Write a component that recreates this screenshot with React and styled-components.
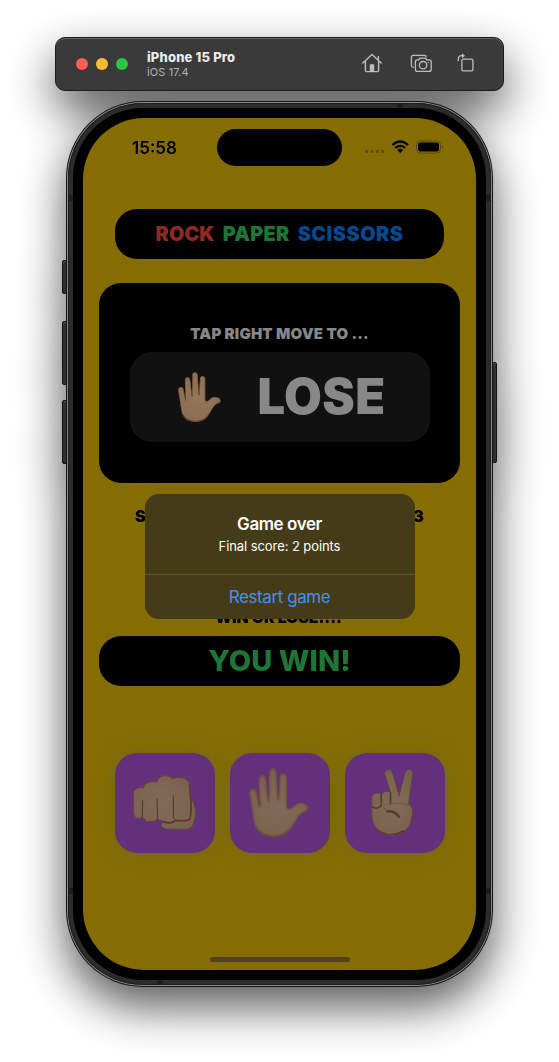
import React from "react";
import styled, { createGlobalStyle } from "styled-components";

const GlobalStyle = createGlobalStyle`
  * { box-sizing: border-box; }
  body { margin: 0; background: #fff; font-family: Inter, "Liberation Sans", sans-serif; }
`;

const Simulator = styled.main`
  width: 559px;
  height: 1062px;
  overflow: hidden;
  background: #fff;
`;

const Window = styled.div`
  display: flex;
  flex-direction: column;
  align-items: center;
  gap: 10px;
  padding-top: 37px;
  filter: drop-shadow(0 20px 23px rgba(0, 0, 0, 0.65));
`;

const Toolbar = styled.header`
  display: flex;
  align-items: center;
  width: 449px;
  height: 54px;
  padding: 0 29px 0 20px;
  border: 1px solid #1d1c1d;
  border-radius: 10px;
  background: #3a3a3a;
  box-shadow: inset 0 1px 0 #626262;
`;

const TrafficLights = styled.div`
  display: flex;
  gap: 8px;
`;

const Light = styled.span`
  width: 12px;
  height: 12px;
  border-radius: 50%;
  background: ${(p) => p.$color};
`;

const DeviceInfo = styled.div`
  margin-left: 19px;
  flex: 1;
`;

const DeviceName = styled.div`
  font-size: 13px;
  line-height: 15px;
  font-weight: 800;
  letter-spacing: 0.17px;
  color: #ececec;
`;

const DeviceOs = styled.div`
  font-size: 11px;
  line-height: 14px;
  letter-spacing: 0.1px;
  color: #b3b3b3;
`;

const Tools = styled.div`
  display: flex;
  align-items: center;
  gap: 28px;
  height: 22px;
  margin-bottom: 2px;

  svg:last-child {
    margin-left: -3px;
  }
`;

const Phone = styled.section`
  position: relative;
  width: 427px;
  height: 886px;
  padding: 1px;
  border-radius: 77px;
  background: #151515;
`;

const Rim = styled.div`
  height: 100%;
  padding: 1px;
  border-radius: 76px;
  background: #8b8b8b;
`;

const Band = styled.div`
  position: relative;
  height: 100%;
  padding: 5px;
  border-radius: 75px;
  background: #2c2c2c;
  box-shadow: inset 0 0 0 1px #1e1e1e;
`;

const Bezel = styled.div`
  position: relative;
  height: 100%;
  padding: 10px;
  border-radius: 70px;
  background: #000;
`;

const Antenna = styled.span`
  position: absolute;
  background: #1c1c1c;
  ${(p) => (p.$vertical ? "width: 5px; height: 6px;" : "width: 6px; height: 5px;")}
  ${(p) => p.$side}: 0;
  ${(p) => p.$from}: ${(p) => p.$at}px;
`;

const SideButton = styled.span`
  position: absolute;
  ${(p) => p.$side}: -4px;
  top: ${(p) => p.$top}px;
  width: 5px;
  height: ${(p) => p.$length}px;
  border: 1px solid #111;
  border-radius: 2px;
  background: #303030;
  box-shadow: inset 0 1px 0 #555;
`;

const Screen = styled.div`
  position: relative;
  display: flex;
  flex-direction: column;
  height: 852px;
  border-radius: 61px;
  overflow: hidden;
  background: #856d04;
`;

const StatusBar = styled.div`
  display: flex;
  align-items: center;
  height: 37px;
  margin-top: 11px;
  padding: 0 32px 0 49px;
`;

const Clock = styled.time`
  width: 85px;
  font-size: 17px;
  line-height: 20px;
  font-weight: 600;
  letter-spacing: 0;
  color: #000;
`;

const Island = styled.div`
  width: 125px;
  height: 37px;
  border-radius: 19px;
  background: #000;
`;

const StatusIcons = styled.div`
  display: flex;
  align-items: center;
  margin-left: 22px;
  margin-bottom: 1px;
`;

const Game = styled.div`
  display: flex;
  flex-direction: column;
  padding: 43px 16px 0;
`;

const TitlePill = styled.h1`
  display: flex;
  justify-content: center;
  align-items: center;
  gap: 8.2px;
  height: 50px;
  margin: 0 16px;
  border-radius: 22px;
  background: #000;
  font-size: 19.8px;
  font-weight: 900;
`;

const Word = styled.span`
  color: ${(p) => p.$color};
  letter-spacing: ${(p) => p.$track || 0}px;
`;

const ChallengeCard = styled.section`
  display: flex;
  flex-direction: column;
  align-items: center;
  height: 200px;
  margin-top: 24px;
  padding-top: 41px;
  border-radius: 22px;
  background: #000;
`;

const Prompt = styled.p`
  margin: 0 0 8px;
  font-size: 15px;
  line-height: 20px;
  font-weight: 900;
  letter-spacing: 0.2px;
  color: #888;
`;

const Challenge = styled.div`
  display: flex;
  align-items: center;
  width: 300px;
  height: 90px;
  padding: 0 44px 0 48px;
  justify-content: space-between;
  border-radius: 22px;
  background: #111;
`;

const Goal = styled.strong`
  font-size: 48.8px;
  line-height: 60px;
  font-weight: 900;
  letter-spacing: 0.4px;
  color: #888;
`;

const Stats = styled.div`
  display: flex;
  justify-content: space-between;
  margin: 23px 36px 0;
  font-size: 16px;
  line-height: 20px;
  font-weight: 900;
  color: #000;
`;

const Caption = styled.p`
  margin: 81px 0 9px;
  text-align: center;
  font-size: 16px;
  line-height: 20px;
  font-weight: 900;
  letter-spacing: -0.15px;
  color: #000;
`;

const ResultPill = styled.div`
  height: 50px;
  border-radius: 22px;
  background: #000;
  text-align: center;
  font-size: 29px;
  line-height: 50px;
  font-weight: 800;
  letter-spacing: 0.05px;
  color: #1d7635;
`;

const Moves = styled.div`
  display: flex;
  justify-content: space-between;
  margin: 67px 15.5px 0 16px;
`;

const Move = styled.button`
  display: flex;
  align-items: center;
  justify-content: center;
  width: 99.6px;
  height: 99.6px;
  padding: 0 ${(p) => p.$shift || 0}px 0 0;
  border: 0;
  border-radius: 22px;
  background: #642f7b;
  box-shadow: 0 0 18px rgba(80, 100, 60, 0.35);
`;

const HomeIndicator = styled.div`
  width: 140px;
  height: 5px;
  margin: auto auto 8px;
  border-radius: 3px;
  background: #50441f;
`;

const AlertLayer = styled.div`
  position: absolute;
  inset: 0;
  display: flex;
  align-items: center;
  justify-content: center;
  padding: 59px 0 34px;
`;

const Alert = styled.div`
  width: 270px;
  height: 124.5px;
  border-radius: 14px;
  background: #443b18;
  text-align: center;
`;

const AlertBody = styled.div`
  height: 80.5px;
  padding-top: 19px;
  border-bottom: 1px solid #6a5a22;
`;

const AlertTitle = styled.h2`
  margin: 0;
  font-size: 17px;
  line-height: 22px;
  font-weight: 600;
  letter-spacing: -0.43px;
  color: #fff;
`;

const AlertText = styled.p`
  margin: 2px 0 0;
  font-size: 13px;
  line-height: 18px;
  letter-spacing: -0.08px;
  color: #fff;
`;

const AlertAction = styled.button`
  width: 100%;
  height: 44px;
  padding: 0;
  border: 0;
  background: none;
  font-family: inherit;
  font-size: 17px;
  letter-spacing: -0.4px;
  color: #4590f0;
`;

const palettes = {
  dim: { fill: "#7d6651", mid: "#775f4b", edge: "#5a3a2d", glow: "#806a56" },
  warm: { fill: "#8d7056", mid: "#84654a", edge: "#694228", glow: "#947658" },
};

function Skin({ id, tone }) {
  const c = palettes[tone];
  return (
    <defs>
      <radialGradient id={id} cx="48%" cy="52%" r="62%">
        <stop offset="0" stopColor={c.glow} />
        <stop offset="0.65" stopColor={c.fill} />
        <stop offset="1" stopColor={c.mid} />
      </radialGradient>
      <filter id={id + "s"} x="-10%" y="-10%" width="120%" height="120%">
        <feGaussianBlur stdDeviation="2.4" />
      </filter>
    </defs>
  );
}

const PALM =
  "M1 76C0 59 20 58 23 72L32 119L29 38C28 18 49 17 51 34L59 102L60 13C61-3 81-3 82 13L88 97L92 28C93 12 113 13 114 29L114 116C117 127 127 122 135 113C147 101 172 103 178 117C181 130 165 130 155 139C143 150 138 166 127 181C111 205 93 209 65 208C36 206 19 189 14 160Z";

function Palm({ width, tone = "dim", id }) {
  const c = palettes[tone];
  return (
    <svg width={width} height={(width * 210) / 180} viewBox="0 0 180 210" aria-hidden="true">
      <Skin id={id} tone={tone} />
      <clipPath id={id + "c"}><path d={PALM} /></clipPath>
      <path d={PALM} fill={`url(#${id})`} />
      <g clipPath={`url(#${id}c)`}>
        <g filter={`url(#${id}s)`} fill="none" stroke={c.edge}>
          <path d={PALM} strokeWidth="3.5" />
          <path d="M18 180Q40 210 78 208Q112 206 136 173" strokeWidth="7" />
        </g>
      </g>
    </svg>
  );
}

const FIST = "M3 62C2 43 16 35 34 38C36 21 58 17 74 21C77-1 108-4 123 10C143 3 165 6 174 25C179 35 177 46 180 73C192 88 195 119 187 143C182 160 173 166 157 164L101 163C86 160 86 149 92 141C88 136 82 137 77 132C70 142 53 143 42 139C34 134 35 129 30 128C13 135 5 128 4 114Z";

function Fist({ width, id }) {
  const c = palettes.dim;
  return (
    <svg width={width} height={(width * 168) / 194} viewBox="0 0 194 168" aria-hidden="true">
      <Skin id={id} tone="dim" />
      <clipPath id={id + "c"}><path d={FIST} /></clipPath>
      <path d={FIST} fill={`url(#${id})`} />
      <g clipPath={`url(#${id}c)`} fill="none" stroke={c.edge} strokeLinecap="round">
        <g filter={`url(#${id}s)`}>
          <path d={FIST} strokeWidth="3.5" />
          <path d="M32 78L31 128M75 72L77 132M124 62L125 130" strokeWidth="3.5" />
          <path d="M174 28Q182 128 172 134Q159 140 131 136Q118 150 94 140" strokeWidth="6" />
        </g>
      </g>
    </svg>
  );
}

const VICTORY = "M2 86C2 70 24 70 32 76C38 65 52 66 58 69L41 16C39-1 60-3 65 10L85 78L102 12C106-4 128-1 127 13L114 104C128 113 129 130 124 148C118 184 99 201 61 201C25 200 1 174 2 132Z";

function Victory({ width, id }) {
  const c = palettes.dim;
  return (
    <svg width={width} height={(width * 204) / 130} viewBox="0 0 130 204" aria-hidden="true">
      <Skin id={id} tone="dim" />
      <clipPath id={id + "c"}><path d={VICTORY} /></clipPath>
      <path d={VICTORY} fill={`url(#${id})`} />
      <g clipPath={`url(#${id}c)`} fill="none" stroke={c.edge} strokeLinecap="round">
        <g filter={`url(#${id}s)`}>
          <path d={VICTORY} strokeWidth="3.5" />
          <path d="M31 76V110Q18 125 3 114M59 72V104" strokeWidth="5" />
          <path d="M50 128Q72 126 84 144" strokeWidth="8" />
          <path d="M20 186Q54 213 98 189" strokeWidth="8" />
        </g>
        <path d="M38 114Q44 105 60 105Q92 100 114 111" strokeWidth="1.5" opacity="0.6" />
        <path d="M38 118Q44 128 58 130Q76 130 83 142" strokeWidth="2.5" />
      </g>
    </svg>
  );
}

const HomeIcon = () => (
  <svg width="20" height="20" viewBox="0 0 20 20" fill="none" stroke="#bdbdbd" strokeWidth="1.4" strokeLinejoin="round" strokeLinecap="round">
    <path d="M.8 10L10 1.4L19.2 10M3.4 8V17.6Q3.4 18.6 4.4 18.6H15.6Q16.6 18.6 16.6 17.6V8M16.4 3.4V7" />
    <path d="M7.8 18V12Q7.8 11.2 8.6 11.2H11.4Q12.2 11.2 12.2 12V18Z" fill="#bdbdbd" stroke="none" />
  </svg>
);

const CameraIcon = () => (
  <svg width="22" height="20" viewBox="0 0 22 20" fill="none" stroke="#bdbdbd" strokeWidth="1.3" strokeLinejoin="round">
    <path d="M3.9 14.2H3.2Q1.4 14.2 1.4 12.4V4.2Q1.4 2.4 3.2 2.4H14.4Q16.2 2.4 16.2 4.2" />
    <path d="M7.3 6.9H8.7L9.9 5.2H15.5L16.7 6.9H19.3Q21.2 6.9 21.2 8.8V16.4Q21.2 18.3 19.3 18.3H7.3Q5.4 18.3 5.4 16.4V8.8Q5.4 6.9 7.3 6.9Z" />
    <circle cx="13.1" cy="12.2" r="3.7" />
    <circle cx="18.2" cy="9.4" r=".7" fill="#bdbdbd" stroke="none" />
  </svg>
);

const RotateIcon = () => (
  <svg width="17" height="20" viewBox="0 0 17 20" fill="none" stroke="#bdbdbd" strokeWidth="1.3" strokeLinejoin="round">
    <rect x="4.9" y="6.2" width="11" height="11.7" rx="1.3" />
    <path d="M1.3 8.2V6.2Q1.3 2.7 4.9 2.7H6.2" />
    <path d="M5 .2L8 2.7L5 5.2Z" fill="#bdbdbd" stroke="none" />
  </svg>
);

const StatusGlyphs = () => (
  <svg width="79" height="14" viewBox="0 0 79 14">
    <g fill="#5c4c06">
      <rect x="1" y="10" width="3" height="3" rx=".8" />
      <rect x="6.4" y="10" width="3" height="3" rx=".8" />
      <rect x="11.7" y="10" width="3" height="3" rx=".8" />
      <rect x="17" y="10" width="3" height="3" rx=".8" />
    </g>
    <g fill="none" stroke="#000" strokeWidth="2.3">
      <path d="M28.4 5Q36.2-2 44 5" />
      <path d="M31.2 8Q36.2 3.7 41.2 8" />
    </g>
    <path d="M33.2 10Q36.2 7.7 39.2 10L36.2 13Z" />
    <rect x="52.5" y=".9" width="24" height="12.2" rx="3.8" fill="none" stroke="#5c4c06" />
    <rect x="54" y="2.4" width="21" height="9.2" rx="2.5" />
    <path d="M77.6 5Q79 5.4 79 7T77.6 9Z" fill="#5c4c06" />
  </svg>
);

export default function App() {
  return (
    <Simulator>
      <GlobalStyle />
      <Window>
        <Toolbar>
          <TrafficLights>
            <Light $color="#ff5f57" />
            <Light $color="#febc2e" />
            <Light $color="#28c840" />
          </TrafficLights>
          <DeviceInfo>
            <DeviceName>iPhone 15 Pro</DeviceName>
            <DeviceOs>iOS 17.4</DeviceOs>
          </DeviceInfo>
          <Tools>
            <HomeIcon />
            <CameraIcon />
            <RotateIcon />
          </Tools>
        </Toolbar>
        <Phone>
          <SideButton $side="left" $top={159} $length={34} />
          <SideButton $side="left" $top={220} $length={64} />
          <SideButton $side="left" $top={299} $length={64} />
          <SideButton $side="right" $top={261} $length={101} />
          <Rim>
            <Band>
              <Antenna $side="top" $from="right" $at={88} />
              <Antenna $side="bottom" $from="left" $at={89} />
              <Antenna $vertical $side="left" $from="top" $at={92} />
              <Antenna $vertical $side="right" $from="top" $at={92} />
              <Antenna $vertical $side="left" $from="bottom" $at={91} />
              <Antenna $vertical $side="right" $from="bottom" $at={91} />
              <Bezel>
                <Screen>
                  <StatusBar>
                    <Clock>15:58</Clock>
                    <Island />
                    <StatusIcons><StatusGlyphs /></StatusIcons>
                  </StatusBar>
                  <Game>
                    <TitlePill>
                      <Word $color="#8e2a22" $track={0.15}>ROCK</Word>
                      <Word $color="#1d7635" $track={0.3}>PAPER</Word>
                      <Word $color="#064890" $track={0.5}>SCISSORS</Word>
                    </TitlePill>
                    <ChallengeCard>
                      <Prompt>TAP RIGHT MOVE TO ...</Prompt>
                      <Challenge>
                        <Palm id="askedMove" width={43} tone="warm" />
                        <Goal>LOSE</Goal>
                      </Challenge>
                    </ChallengeCard>
                    <Stats>
                      <span>SCORE: 2</span>
                      <span>ROUND: 3</span>
                    </Stats>
                    <Caption>WIN OR LOSE...?</Caption>
                    <ResultPill>YOU WIN!</ResultPill>
                    <Moves>
                      <Move aria-label="Rock" $shift={2}><Fist id="rock" width={64.5} /></Move>
                      <Move aria-label="Paper" $shift={1}><Palm id="paper" width={60} /></Move>
                      <Move aria-label="Scissors" $shift={5}><Victory id="scissors" width={43} /></Move>
                    </Moves>
                  </Game>
                  <HomeIndicator />
                  <AlertLayer>
                    <Alert role="alertdialog">
                      <AlertBody>
                        <AlertTitle>Game over</AlertTitle>
                        <AlertText>Final score: 2 points</AlertText>
                      </AlertBody>
                      <AlertAction>Restart game</AlertAction>
                    </Alert>
                  </AlertLayer>
                </Screen>
              </Bezel>
            </Band>
          </Rim>
        </Phone>
      </Window>
    </Simulator>
  );
}
